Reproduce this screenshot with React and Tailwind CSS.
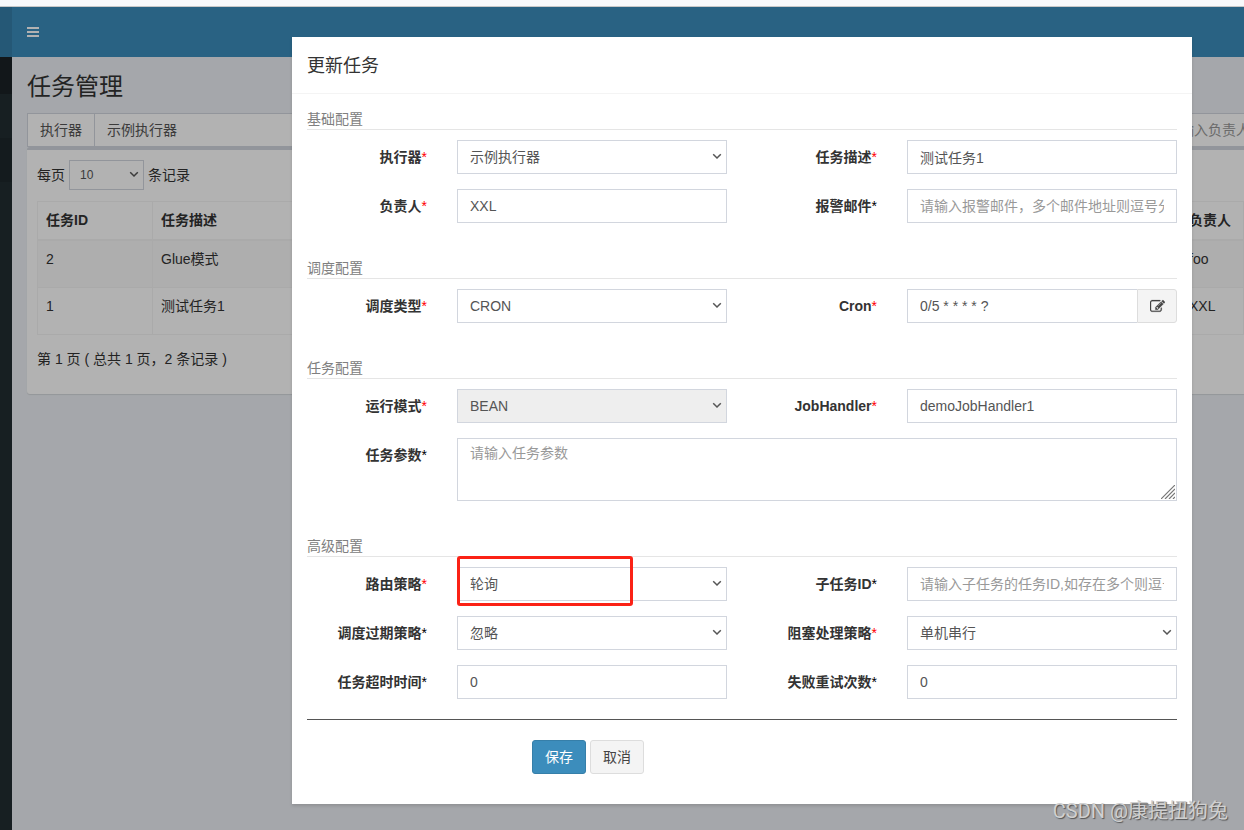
import React from "react";

const jobs = [
  { id: 2, desc: "Glue模式", author: "foo" },
  { id: 1, desc: "测试任务1", author: "XXL" },
];

const control =
  "block w-full h-[34px] px-3 bg-white border border-[#d2d6de] text-sm text-[#555] placeholder:text-[#999] outline-none";

function Chevron() {
  return (
    <svg
      className="absolute right-[5px] top-1/2 -translate-y-1/2 pointer-events-none"
      width="10"
      height="8"
      viewBox="0 0 10 8"
      fill="none"
      stroke="#555"
      strokeWidth="1.5"
    >
      <path d="M1.2 1.2 L5 5 L8.8 1.2" />
    </svg>
  );
}

function Label({ htmlFor, required, children }) {
  return (
    <label
      htmlFor={htmlFor}
      className="pt-[7px] pr-[15px] text-right text-sm font-bold whitespace-nowrap"
    >
      {children}
      <span className={required ? "font-normal text-[#f00]" : "font-normal text-black"}>*</span>
    </label>
  );
}

function Select({ id, value, disabled }) {
  return (
    <div className="relative">
      <select
        id={id}
        disabled={disabled}
        className={`${control} appearance-none rounded-none opacity-100 disabled:bg-[#eee]`}
      >
        <option>{value}</option>
      </select>
      <Chevron />
    </div>
  );
}

// One label + control pair, two pairs fit in a row
function Field({ id, label, required, children }) {
  return (
    <>
      <Label htmlFor={id} required={required}>
        {label}
      </Label>
      <div className="col-span-2 px-[15px]">{children}</div>
    </>
  );
}

function Section({ title, children }) {
  return (
    <section className="mb-5">
      <p className="mb-[10px] border-b border-[#e5e5e5] text-sm text-[#808080]">
        {title}
      </p>
      <div className="-mx-[15px] grid grid-cols-6 gap-y-[15px] pb-[15px]">
        {children}
      </div>
    </section>
  );
}

function Resizer() {
  return (
    <svg
      className="absolute right-[2px] bottom-[2px] pointer-events-none"
      width="14"
      height="14"
      viewBox="0 0 14 14"
      stroke="#777"
      strokeWidth="1.2"
    >
      <path d="M0 14 L14 0 M4 14 L14 4 M8 14 L14 8 M12 14 L14 12" />
    </svg>
  );
}

function UpdateModal() {
  return (
    <div
      role="dialog"
      aria-labelledby="modal-title"
      className="w-full max-w-[900px] bg-white text-[#333] shadow-[0_2px_3px_rgba(0,0,0,0.13)]"
    >
      <div className="border-b border-[#f4f4f4] px-[15px] pt-4 pb-[14px]">
        <h4 id="modal-title" className="text-lg leading-[26px] font-normal">
          更新任务
        </h4>
      </div>
      <form className="p-[15px]" onSubmit={(e) => e.preventDefault()}>
        <Section title="基础配置">
          <Field id="jobGroup" label="执行器" required>
            <Select id="jobGroup" value="示例执行器" />
          </Field>
          <Field id="jobDesc" label="任务描述" required>
            <input id="jobDesc" className={control} defaultValue="测试任务1" />
          </Field>
          <Field id="author" label="负责人" required>
            <input id="author" className={control} defaultValue="XXL" />
          </Field>
          <Field id="alarmEmail" label="报警邮件">
            <input
              id="alarmEmail"
              className={control}
              placeholder="请输入报警邮件，多个邮件地址则逗号分隔"
            />
          </Field>
        </Section>

        <Section title="调度配置">
          <Field id="scheduleType" label="调度类型" required>
            <Select id="scheduleType" value="CRON" />
          </Field>
          <Field id="cron" label="Cron" required>
            <div className="flex">
              <input
                id="cron"
                className={`${control} min-w-0 flex-1 border-r-0`}
                defaultValue="0/5 * * * * ?"
              />
              <button
                type="button"
                aria-label="Cron"
                className="flex w-10 items-center justify-center rounded-r-[3px] border border-[#ddd] bg-[#f4f4f4] text-[#444]"
              >
                <svg
                  width="15"
                  height="15"
                  viewBox="0 0 1792 1792"
                  fill="currentColor"
                  stroke="currentColor"
                  strokeWidth="24"
                >
                  <path d="M888 1184l116-116-152-152-116 116v56h96v96h56zm440-720q-16-16-33 1l-350 350q-17 17-1 33t33-1l350-350q17-17 1-33zm80 594v190q0 119-84.5 203.5t-203.5 84.5h-832q-119 0-203.5-84.5t-84.5-203.5v-832q0-119 84.5-203.5t203.5-84.5h832q63 0 117 25 15 7 18 23 3 17-9 29l-49 49q-14 14-32 8-23-6-45-6h-832q-66 0-113 47t-47 113v832q0 66 47 113t113 47h832q66 0 113-47t47-113v-126q0-13 9-22l64-64q15-15 35-7t20 29zm-96-738l288 288-672 672h-288v-288zm444 132l-92 92-288-288 92-92q28-28 68-28t68 28l152 152q28 28 28 68t-28 68z" />
                </svg>
              </button>
            </div>
          </Field>
        </Section>

        <Section title="任务配置">
          <Field id="glueType" label="运行模式" required>
            <Select id="glueType" value="BEAN" disabled />
          </Field>
          <Field id="handler" label="JobHandler" required>
            <input id="handler" className={control} defaultValue="demoJobHandler1" />
          </Field>
          <Label htmlFor="param">任务参数</Label>
          <div className="relative col-span-5 mx-[15px]">
            <textarea
              id="param"
              placeholder="请输入任务参数"
              className="block h-[63px] w-full resize-none border border-[#d2d6de] px-3 py-1 text-sm leading-5 text-[#555] outline-none placeholder:text-[#999]"
            />
            <Resizer />
          </div>
        </Section>

        <Section title="高级配置">
          <Field id="route" label="路由策略" required>
            <div className="relative">
              <Select id="route" value="轮询" />
              {/* highlighted option */}
              <div className="pointer-events-none absolute -top-[11px] left-0 h-[50px] w-[176px] rounded-[3px] border-3 border-[#fb2216]" />
            </div>
          </Field>
          <Field id="childJobId" label="子任务ID">
            <input
              id="childJobId"
              className={control}
              placeholder="请输入子任务的任务ID,如存在多个则逗号分隔"
            />
          </Field>
          <Field id="misfire" label="调度过期策略">
            <Select id="misfire" value="忽略" />
          </Field>
          <Field id="block" label="阻塞处理策略" required>
            <Select id="block" value="单机串行" />
          </Field>
          <Field id="timeout" label="任务超时时间">
            <input id="timeout" className={control} defaultValue="0" />
          </Field>
          <Field id="retry" label="失败重试次数">
            <input id="retry" className={control} defaultValue="0" />
          </Field>
        </Section>

        <div className="-mt-[15px] border-t border-[#555]" />
        <div className="-mx-[15px] grid grid-cols-4 pt-5 pb-[15px]">
          <div className="col-span-3 col-start-2 flex gap-1 px-[15px]">
            <button
              type="submit"
              className="h-[34px] rounded-[3px] border border-[#367fa9] bg-[#3c8dbc] px-3 text-sm text-white"
            >
              保存
            </button>
            <button
              type="button"
              className="h-[34px] rounded-[3px] border border-[#ddd] bg-[#f4f4f4] px-3 text-sm text-[#444]"
            >
              取消
            </button>
          </div>
        </div>
      </form>
    </div>
  );
}

function JobPage() {
  return (
    <div className="flex flex-1">
      <aside className="flex w-3 shrink-0 flex-col bg-[#222d32]">
        <div className="h-[50px] bg-[#367fa9]" />
        <div className="h-[37px] bg-[#1a2226]" />
        <div className="mt-11 h-11 bg-[#1e282c]" />
      </aside>
      <div className="min-w-0 flex-1 bg-[#ecf0f5] text-[#333]">
        <header className="flex h-[50px] items-center bg-[#3c8dbc] px-[15px]">
          <button type="button" aria-label="menu" className="text-white">
            <svg width="12" height="10" viewBox="0 0 12 10" fill="currentColor">
              <path d="M0 0h12v2H0zM0 4h12v2H0zM0 8h12v2H0z" />
            </svg>
          </button>
        </header>
        <main className="pt-4 pl-[15px]">
          <h1 className="text-2xl leading-7">任务管理</h1>
          <div className="mt-3 flex h-[34px] border border-r-0 border-[#d2d6de] bg-white text-sm text-[#555]">
            <label htmlFor="filterGroup" className="border-r border-[#d2d6de] px-3 leading-8">
              执行器
            </label>
            <select id="filterGroup" className="w-60 appearance-none px-3 outline-none">
              <option>示例执行器</option>
            </select>
            <input
              aria-label="负责人"
              placeholder="请输入负责人"
              className="ml-auto w-[78px] outline-none placeholder:text-[#999]"
            />
          </div>
          <div className="rounded-l-[3px] border-t-3 border-[#d2d6de] bg-white pt-[10px] pb-[25px] pl-[10px] shadow-[0_1px_1px_rgba(0,0,0,0.1)]">
            <div className="flex h-[30px] items-center gap-1 text-sm">
              <label htmlFor="pageSize">每页</label>
              <div className="relative">
                <select
                  id="pageSize"
                  className="block h-[30px] w-[75px] appearance-none border border-[#d2d6de] px-[10px] text-xs text-[#555] outline-none"
                >
                  <option>10</option>
                </select>
                <Chevron />
              </div>
              <span>条记录</span>
            </div>
            <table className="mt-[11px] w-full table-fixed border-separate border-spacing-0 border-t border-l border-[#f4f4f4] text-left text-sm">
              <colgroup>
                <col className="w-[115px]" />
                <col />
                <col className="w-[63px]" />
              </colgroup>
              <thead>
                <tr className="h-[39px]">
                  {["任务ID", "任务描述", "负责人"].map((name) => (
                    <th
                      key={name}
                      className="border-r border-b-2 border-[#f4f4f4] px-2 pt-2 align-top font-bold whitespace-nowrap"
                    >
                      {name}
                    </th>
                  ))}
                </tr>
              </thead>
              <tbody>
                {jobs.map((job) => (
                  <tr key={job.id} className="h-[47px] odd:bg-[#f9f9f9]">
                    <td className="border-r border-b border-[#f4f4f4] px-2 pt-2 align-top">{job.id}</td>
                    <td className="border-r border-b border-[#f4f4f4] px-2 pt-2 align-top">{job.desc}</td>
                    <td className="border-r border-b border-[#f4f4f4] px-2 pt-2 align-top">{job.author}</td>
                  </tr>
                ))}
              </tbody>
            </table>
            <p className="pt-[14px] text-sm">第 1 页 ( 总共 1 页，2 条记录 )</p>
          </div>
        </main>
      </div>
    </div>
  );
}

export default function App() {
  return (
    <div className="flex min-h-screen flex-col font-['Liberation_Sans','Noto_Sans_CJK_SC',sans-serif]">
      <div className="h-[7px] border-b border-[#c8c8c8] bg-[#f8f9fb]" />
      <div className="relative flex flex-1 flex-col overflow-hidden">
        <JobPage />
        <div className="absolute inset-0 flex items-start justify-end bg-black/30 pt-[30px] pr-13">
          <UpdateModal />
        </div>
        <div className="absolute right-4 bottom-[5px] font-[Roboto,'Noto_Sans_CJK_SC',sans-serif] text-xl text-[#d0d0d0] [text-shadow:1px_1px_1px_#555]">
          CSDN @康提扭狗兔
        </div>
      </div>
    </div>
  );
}
